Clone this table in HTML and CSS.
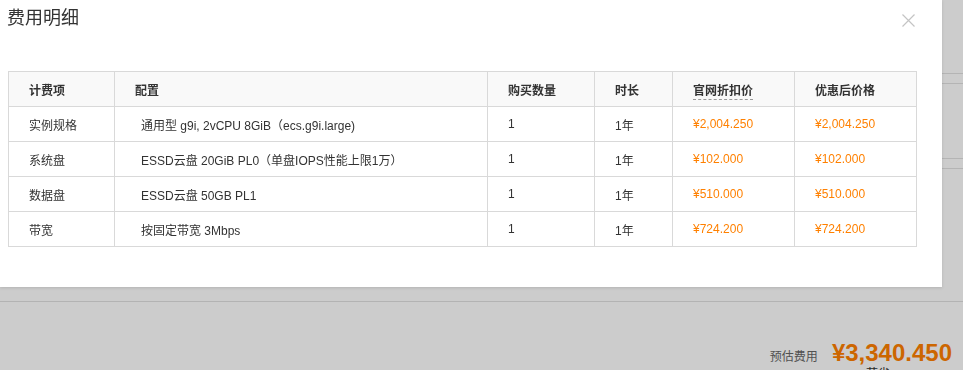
FILE: index.html
```html
<!DOCTYPE html>
<html lang="zh-CN">
<head>
<meta charset="utf-8">
<title>费用明细</title>
<link rel="stylesheet" href="styles.css">
</head>
<body>
<div class="page">
  <div class="band band-first"></div>
  <div class="band band-second"></div>
  <div class="footer">
    <div class="total">
      <span class="total-label">预估费用</span>
      <span class="total-price">¥3,340.450</span>
    </div>
    <div class="total-sub">节省</div>
  </div>
</div>
<div class="overlay"></div>
<div class="modal">
  <div class="modal-head">
    <div class="modal-title">费用明细</div>
    <svg class="close" width="13" height="13" viewBox="0 0 13 13" aria-label="关闭">
      <path d="M0.5 0.5 L12.5 12.5 M12.5 0.5 L0.5 12.5" stroke="#c4c4c4" stroke-width="1.2" fill="none"/>
    </svg>
  </div>
  <table class="fee-table">
    <colgroup>
      <col class="c1"><col class="c2"><col class="c3"><col class="c4"><col class="c5"><col class="c6">
    </colgroup>
    <thead>
      <tr>
        <th>计费项</th>
        <th>配置</th>
        <th>购买数量</th>
        <th>时长</th>
        <th><span class="dashed">官网折扣价</span></th>
        <th>优惠后价格</th>
      </tr>
    </thead>
    <tbody>
      <tr>
        <td>实例规格</td>
        <td class="conf">通用型 g9i, 2vCPU 8GiB（ecs.g9i.large)</td>
        <td>1</td>
        <td>1年</td>
        <td class="price">¥2,004.250</td>
        <td class="price">¥2,004.250</td>
      </tr>
      <tr>
        <td>系统盘</td>
        <td class="conf">ESSD云盘 20GiB PL0（单盘IOPS性能上限1万）</td>
        <td>1</td>
        <td>1年</td>
        <td class="price">¥102.000</td>
        <td class="price">¥102.000</td>
      </tr>
      <tr>
        <td>数据盘</td>
        <td class="conf">ESSD云盘 50GB PL1</td>
        <td>1</td>
        <td>1年</td>
        <td class="price">¥510.000</td>
        <td class="price">¥510.000</td>
      </tr>
      <tr>
        <td>带宽</td>
        <td class="conf">按固定带宽 3Mbps</td>
        <td>1</td>
        <td>1年</td>
        <td class="price">¥724.200</td>
        <td class="price">¥724.200</td>
      </tr>
    </tbody>
  </table>
</div>
</body>
</html>
```
FILE: styles.css
```css
html, body {
  margin: 0;
  padding: 0;
  height: 100%;
  overflow: hidden;
}
body {
  font-family: "Liberation Sans", Arial, "Noto Sans CJK SC", sans-serif;
  color: #333;
  background: #fff;
  font-size: 12px;
}
.page {
  width: 963px;
  height: 370px;
  padding-top: 73px;
  box-sizing: border-box;
}
.band {
  height: 9px;
  border-top: 1px solid #e1e1e1;
  border-bottom: 1px solid #e1e1e1;
}
.band-second {
  margin-top: 74px;
}
.footer {
  margin-top: 132px;
  border-top: 1px solid #e0e0e0;
  padding: 37px 11px 0 0;
}
.total {
  display: flex;
  justify-content: flex-end;
  align-items: baseline;
  gap: 14px;
  height: 28px;
}
.total-label {
  font-size: 12px;
  color: #666;
}
.total-price {
  font-size: 24px;
  line-height: 28px;
  font-weight: 700;
  color: #ff8000;
}
.total-sub {
  margin-left: 866px;
  margin-top: -1px;
  font-size: 12px;
  line-height: 16px;
  color: #333;
}
.overlay {
  position: fixed;
  inset: 0;
  background: rgba(0, 0, 0, 0.2);
}
.modal {
  position: absolute;
  left: 0;
  top: 0;
  width: 942px;
  height: 287px;
  background: #fff;
  box-shadow: 0 1px 3px rgba(0, 0, 0, 0.12);
}
.modal-head {
  display: flex;
  justify-content: space-between;
  align-items: flex-start;
  padding: 6px 27px 0 7px;
}
.modal-title {
  font-size: 18px;
  line-height: 24px;
  color: #333;
}
.close {
  margin-top: 8px;
  display: block;
}
.fee-table {
  margin: 41px 0 0 8px;
  border-collapse: collapse;
  table-layout: fixed;
  width: 909px;
}
.c1 { width: 106px; }
.c2 { width: 373px; }
.c3 { width: 107px; }
.c4 { width: 78px; }
.c5 { width: 122px; }
.c6 { width: 122px; }
.fee-table th,
.fee-table td {
  border: 1px solid #d9d9d9;
  height: 35px;
  padding: 0 0 0 20px;
  text-align: left;
  font-size: 12px;
  white-space: nowrap;
  box-sizing: border-box;
}
.fee-table th {
  background: #f9f9f9;
  font-weight: 700;
  color: #333;
}
.fee-table td.conf {
  padding-left: 26px;
}
.fee-table td.price {
  color: #ff8000;
}
.dashed {
  border-bottom: 1px dashed #999;
  padding-bottom: 1px;
}
```
